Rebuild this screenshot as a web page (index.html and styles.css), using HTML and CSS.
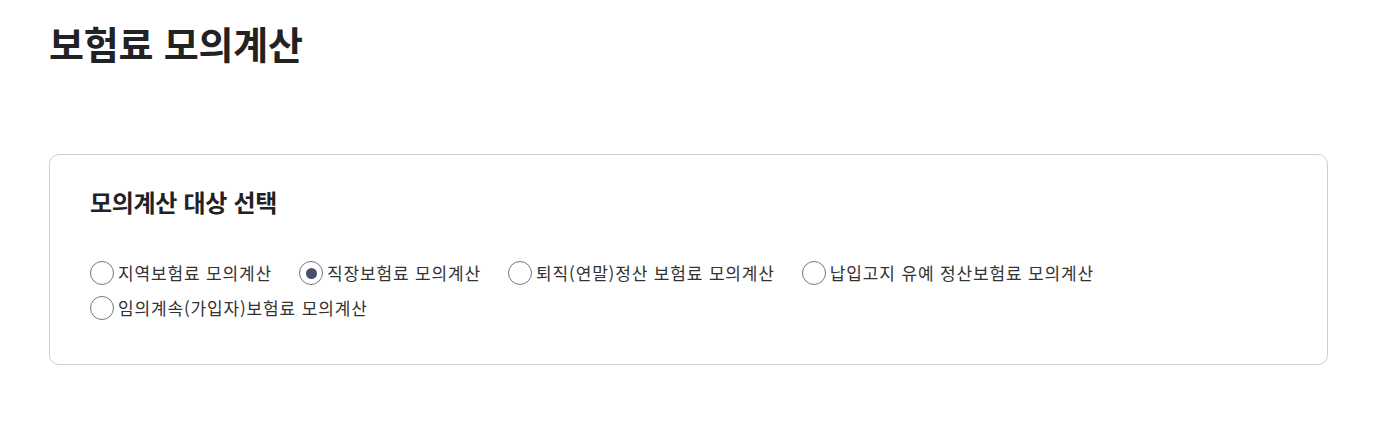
FILE: index.html
```html
<!DOCTYPE html>
<html lang="ko">
<head>
  <meta charset="UTF-8">
  <meta name="viewport" content="width=device-width, initial-scale=1.0">
  <title>보험료 모의계산</title>
  <link rel="stylesheet" href="styles.css">
</head>
<body>

  <!-- Page title -->
  <h1 class="page-title">보험료 모의계산</h1>

  <!-- Target selection -->
  <div class="select-box">
    <h2>모의계산 대상 선택</h2>

    <div class="radio-list">
      <label class="radio-item">
        <input type="radio" name="target" value="1">
        <span class="mark"></span>지역보험료 모의계산
      </label>
      <label class="radio-item">
        <input type="radio" name="target" value="2" checked>
        <span class="mark"></span>직장보험료 모의계산
      </label>
      <label class="radio-item">
        <input type="radio" name="target" value="3">
        <span class="mark"></span>퇴직(연말)정산 보험료 모의계산
      </label>
      <label class="radio-item">
        <input type="radio" name="target" value="4">
        <span class="mark"></span>납입고지 유예 정산보험료 모의계산
      </label>
      <label class="radio-item">
        <input type="radio" name="target" value="5">
        <span class="mark"></span>임의계속(가입자)보험료 모의계산
      </label>
    </div>
  </div>

</body>
</html>
```

FILE: styles.css
```css
* {
  margin: 0;
  padding: 0;
  box-sizing: border-box;
}

body {
  font-family: "Noto Sans CJK KR", "Noto Sans", sans-serif;
  color: #222;
  background: #fff;
  padding: 0 46px 0 49px;
}

.page-title {
  font-size: 38px;
  font-weight: 700;
  line-height: 1;
  padding-top: 24px;
  letter-spacing: -0.2px;
}

.select-box {
  margin-top: 92px;
  border: 1px solid #cfcfcf;
  border-radius: 10px;
  padding: 30px 40px 36px 40px;
  min-height: 211px;
}

.select-box h2 {
  font-size: 24px;
  font-weight: 700;
  line-height: 34px;
  letter-spacing: -0.3px;
}

.radio-list {
  display: flex;
  flex-wrap: wrap;
  margin-top: 42px;
  row-gap: 11px;
}

.radio-item {
  display: flex;
  align-items: center;
  font-size: 17px;
  line-height: 24px;
  letter-spacing: 0.85px;
  color: #333;
  margin-right: 27px;
  cursor: pointer;
}

.radio-item input {
  display: none;
}

.radio-item .mark {
  width: 24px;
  height: 24px;
  border: 1px solid #777;
  border-radius: 50%;
  margin-right: 4px;
  display: flex;
  justify-content: center;
  align-items: center;
}

.radio-item input:checked + .mark::after {
  content: "";
  width: 11px;
  height: 11px;
  border-radius: 50%;
  background: #4b4f68;
}
```
